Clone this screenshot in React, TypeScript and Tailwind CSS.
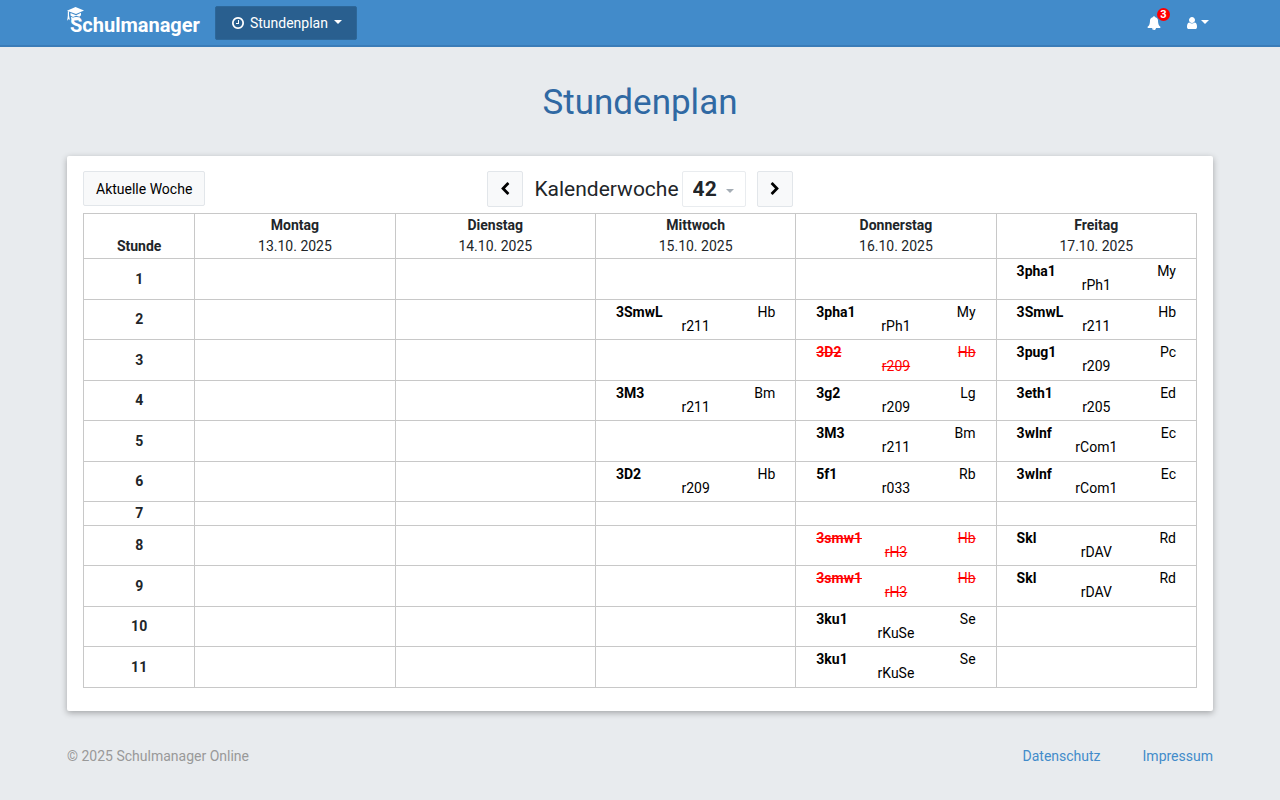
import React from "react";

type Lesson = { subject: string; teacher: string; room: string; cancelled?: boolean };
type Row = { hour: number; lessons: (Lesson | null)[] };

const l = (subject: string, teacher: string, room: string, cancelled = false): Lesson => ({
  subject,
  teacher,
  room,
  cancelled,
});

const days = [
  { name: "Montag", date: "13.10. 2025" },
  { name: "Dienstag", date: "14.10. 2025" },
  { name: "Mittwoch", date: "15.10. 2025" },
  { name: "Donnerstag", date: "16.10. 2025" },
  { name: "Freitag", date: "17.10. 2025" },
];

const rows: Row[] = [
  { hour: 1, lessons: [null, null, null, null, l("3pha1", "My", "rPh1")] },
  { hour: 2, lessons: [null, null, l("3SmwL", "Hb", "r211"), l("3pha1", "My", "rPh1"), l("3SmwL", "Hb", "r211")] },
  { hour: 3, lessons: [null, null, null, l("3D2", "Hb", "r209", true), l("3pug1", "Pc", "r209")] },
  { hour: 4, lessons: [null, null, l("3M3", "Bm", "r211"), l("3g2", "Lg", "r209"), l("3eth1", "Ed", "r205")] },
  { hour: 5, lessons: [null, null, null, l("3M3", "Bm", "r211"), l("3wInf", "Ec", "rCom1")] },
  { hour: 6, lessons: [null, null, l("3D2", "Hb", "r209"), l("5f1", "Rb", "r033"), l("3wInf", "Ec", "rCom1")] },
  { hour: 7, lessons: [null, null, null, null, null] },
  { hour: 8, lessons: [null, null, null, l("3smw1", "Hb", "rH3", true), l("Skl", "Rd", "rDAV")] },
  { hour: 9, lessons: [null, null, null, l("3smw1", "Hb", "rH3", true), l("Skl", "Rd", "rDAV")] },
  { hour: 10, lessons: [null, null, null, l("3ku1", "Se", "rKuSe"), null] },
  { hour: 11, lessons: [null, null, null, l("3ku1", "Se", "rKuSe"), null] },
];

const icons = {
  clock:
    "M1024 544v448q0 14-9 23t-23 9h-320q-14 0-23-9t-9-23v-64q0-14 9-23t23-9h224v-352q0-14 9-23t23-9h64q14 0 23 9t9 23zm416 352q0-148-73-273t-198-198-273-73-273 73-198 198-73 273 73 273 198 198 273 73 273-73 198-198 73-273zm224 0q0 209-103 385.500t-279.500 279.500-385.500 103-385.500-103-279.500-279.500-103-385.500 103-385.500 279.500-279.500 385.500-103 385.500 103 279.500 279.500 103 385.500z",
  left:
    "M1427 301l-531 531 531 531q19 19 19 45t-19 45l-166 166q-19 19-45 19t-45-19l-742-742q-19-19-19-45t19-45l742-742q19-19 45-19t45 19l166 166q19 19 19 45t-19 45z",
  right:
    "M1363 877l-742 742q-19 19-45 19t-45-19l-166-166q-19-19-19-45t19-45l531-531-531-531q-19-19-19-45t19-45l166-166q19-19 45-19t45 19l742 742q19 19 19 45t-19 45z",
  bell:
    "M912 1696q0-16-16-16-59 0-101.500-42.500t-42.500-101.500q0-16-16-16t-16 16q0 73 51.500 124.500t124.500 51.500q16 0 16-16zm816-288q0 52-38 90t-90 38h-448q0 106-75 181t-181 75-181-75-75-181h-448q-52 0-90-38t-38-90q50-42 91-88t85-119.500 74.500-158.500 50-206 19.500-260q0-152 117-282.500t307-158.500q-8-19-8-39 0-40 28-68t68-28 68 28 28 68q0 20-8 39 190 28 307 158.500t117 282.500q0 139 19.500 260t50 206 74.500 158.500 85 119.500 91 88z",
  user:
    "M1536 1399q0 109-62.500 187t-150.500 78h-854q-88 0-150.500-78t-62.500-187q0-85 8.500-160.500t31.500-152 58.500-131 94-89 134.500-34.500q131 128 313 128t313-128q76 0 134.500 34.500t94 89 58.500 131 31.500 152 8.500 160.500zm-256-887q0 159-112.500 271.500t-271.500 112.500-271.500-112.500-112.500-271.500 112.500-271.500 271.500-112.500 271.500 112.500 112.500 271.500z",
};

function Icon({ path, className = "size-4" }: { path: string; className?: string }) {
  return (
    <svg viewBox="0 0 1792 1792" fill="currentColor" aria-hidden="true" className={className}>
      <path d={path} />
    </svg>
  );
}

function Caret({ className = "" }: { className?: string }) {
  return (
    <svg viewBox="0 0 8 4" fill="currentColor" aria-hidden="true" className={"h-1 w-2 " + className}>
      <path d="M0 0h8L4 4z" />
    </svg>
  );
}

function LessonEntry({ lesson }: { lesson: Lesson }) {
  return (
    <div
      className={
        lesson.cancelled
          ? "px-5 pb-[2px] leading-[14px] text-[#ff0000] line-through"
          : "px-5 pb-[2px] leading-[14px] text-black"
      }
    >
      <div className="flex justify-between">
        <span className="font-bold">{lesson.subject}</span>
        <span>{lesson.teacher}</span>
      </div>
      <div className="text-center">{lesson.room}</div>
    </div>
  );
}

export default function App() {
  return (
    <div className="min-h-screen bg-[#e8ebee] font-['Roboto',sans-serif] text-sm text-[#212529]">
      <header className="border-b-2 border-[#3a7cb8] bg-[#428bca] text-white">
        <div className="mx-auto flex h-[45px] max-w-[1146px] items-center pt-px">
          <a href="#" className="relative mr-[15px] pt-1 pl-[3px] text-xl font-bold">
            <svg viewBox="0 0 18 16" fill="currentColor" aria-hidden="true" className="absolute top-0 left-0 h-4 w-[18px]">
              <path d="M0 3.8 8.5 0 17 3.4 9 7z" />
              <path d="M3.5 6 9 8.2l5-2.4v2.4l-1.6 1.6-3.2-1-3.2 1.2-2.5-1.4z" />
              <path d="M.8 4.200H2v4.400L3 13.200 1.800 12 .2 13.800l.6-5z" />
              <path d="m4 9.800 4.200 2L13 10.500l-2 2.700-3 .3-3.600-1z" />
            </svg>
            Schulmanager
          </a>
          <button
            type="button"
            className="flex h-[34px] items-center rounded-xs border border-[#2d6799] bg-[#295f8f] pr-[14px] pl-[15px]"
          >
            <Icon path={icons.clock} className="mr-[5px] size-[14px]" />
            Stundenplan
            <Caret className="mb-[2px] ml-[6px]" />
          </button>
          <div className="ml-auto flex items-center gap-6 pr-1">
            <button type="button" aria-label="Benachrichtigungen" className="relative">
              <Icon path={icons.bell} className="size-[14px]" />
              <span className="absolute -top-2 left-[10px] flex size-[13px] items-center justify-center rounded-full bg-[#ff0000] text-[11px] font-bold">
                3
              </span>
            </button>
            <button type="button" aria-label="Benutzerkonto" className="flex items-center gap-[2px]">
              <Icon path={icons.user} className="size-[14px]" />
              <Caret className="mb-[2px]" />
            </button>
          </div>
        </div>
      </header>

      <main className="mx-auto max-w-[1146px]">
        <h1 className="pt-8 pb-[29px] text-center text-[35px] leading-12 text-[#3069a3]">Stundenplan</h1>

        <section className="rounded-xs bg-white px-4 pt-[15px] pb-[23px] shadow-[0_2px_6px_rgba(0,0,0,0.3)]">
          <div className="mb-[6px] grid grid-cols-[1fr_auto_1fr] items-start">
            <button
              type="button"
              className="h-[35px] justify-self-start rounded-xs border border-[#e2e6ea] bg-[#f8f9fa] px-3 text-black"
            >
              Aktuelle Woche
            </button>
            <div className="flex items-center">
              <button
                type="button"
                aria-label="Vorherige Woche"
                className="flex size-9 items-center justify-center rounded-xs border border-[#e2e6ea] bg-[#f8f9fa] text-black"
              >
                <Icon path={icons.left} className="size-[14px]" />
              </button>
              <label htmlFor="week" className="ml-[11px] text-[21px]">
                Kalenderwoche
              </label>
              <div className="relative ml-[3px]">
                <select
                  id="week"
                  defaultValue="42"
                  className="block h-9 w-16 appearance-none rounded-xs border border-[#e9ecef] bg-white pl-[10px] text-[21px] font-bold"
                >
                  <option>41</option>
                  <option>42</option>
                  <option>43</option>
                </select>
                <Caret className="pointer-events-none absolute top-[18px] right-3 text-[#a5adb5]" />
              </div>
              <button
                type="button"
                aria-label="Nächste Woche"
                className="ml-[11px] flex size-9 items-center justify-center rounded-xs border border-[#e2e6ea] bg-[#f8f9fa] text-black"
              >
                <Icon path={icons.right} className="size-[14px]" />
              </button>
            </div>
          </div>

          <table className="w-full table-fixed border-collapse">
            <thead>
              <tr className="h-[45px]">
                <th scope="col" className="w-1/10 border border-[#c8c8c8] p-0 pb-px align-bottom leading-[21px]">
                  Stunde
                </th>
                {days.map((day) => (
                  <th
                    key={day.name}
                    scope="col"
                    className="border border-[#c8c8c8] p-0 pb-px align-bottom leading-[21px]"
                  >
                    {day.name}
                    <div className="font-normal">{day.date}</div>
                  </th>
                ))}
              </tr>
            </thead>
            <tbody>
              {rows.map((row) => (
                <tr key={row.hour} className={row.hour === 7 ? "h-6" : "odd:h-[41px] even:h-10"}>
                  <th scope="row" className="border border-[#c8c8c8] p-0 leading-[21px]">
                    {row.hour}
                  </th>
                  {row.lessons.map((lesson, i) => (
                    <td key={i} className="border border-[#c8c8c8] p-0">
                      {lesson && <LessonEntry lesson={lesson} />}
                    </td>
                  ))}
                </tr>
              ))}
            </tbody>
          </table>
        </section>

        <footer className="flex justify-between py-[35px] text-[#999999]">
          <span>© 2025 Schulmanager Online</span>
          <nav className="flex gap-[42px] text-[#428bca]">
            <a href="#">Datenschutz</a>
            <a href="#">Impressum</a>
          </nav>
        </footer>
      </main>
    </div>
  );
}
